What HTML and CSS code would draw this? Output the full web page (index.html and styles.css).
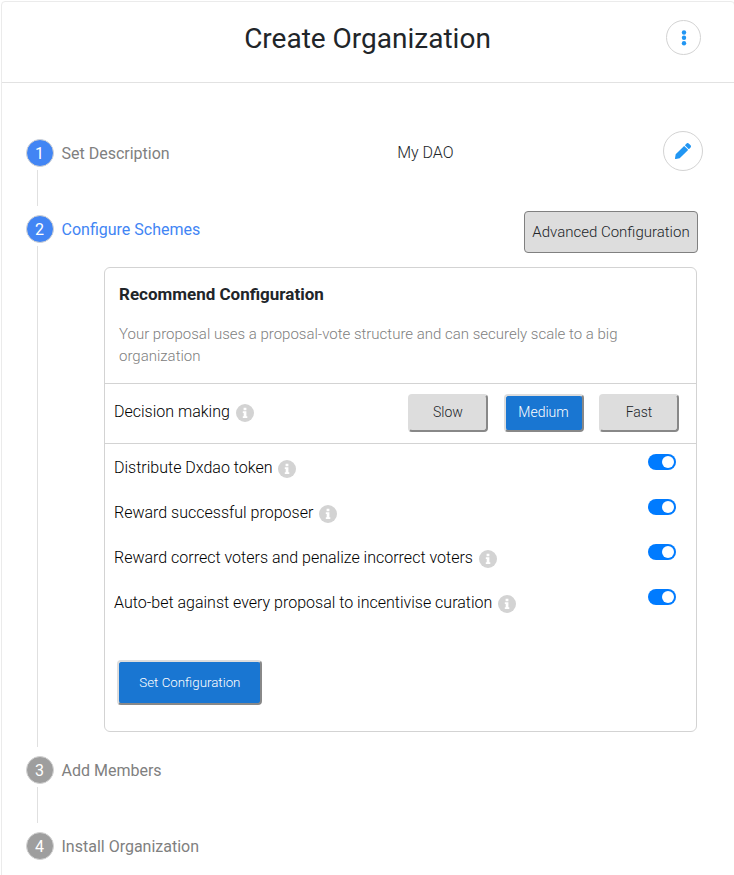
FILE: index.html
```html
<!DOCTYPE html>
<html lang="en">
<head>
<meta charset="utf-8">
<title>Create Organization</title>
<link rel="stylesheet" href="styles.css">
</head>
<body>
<svg class="defs" aria-hidden="true">
  <symbol id="info" viewBox="0 0 18 18">
    <circle cx="9" cy="9" r="9" fill="#d3d3d3"/>
    <path fill="#fff" d="M7.6 3.8h2.8v2.4H7.6zM6.8 7.3h3.6v4.9h.9V14H6.8v-1.8h.9V9.1h-.9z"/>
  </symbol>
</svg>
<main class="panel">
  <header class="header">
    <h1 class="title">Create Organization</h1>
    <button class="round menu" aria-label="Menu">
      <svg width="6" height="16" viewBox="0 0 6 16" fill="#2196f3"><circle cx="3" cy="2.5" r="2.2"/><circle cx="3" cy="7.8" r="2.2"/><circle cx="3" cy="13.2" r="2.2"/></svg>
    </button>
  </header>
  <section class="steps">
    <div class="step">
      <div class="head">
        <span class="num">1</span><span class="label">Set Description</span>
        <span class="value">My DAO</span>
        <button class="round edit" aria-label="Edit">
          <svg width="16" height="16" viewBox="0 0 512 512" fill="#2196f3"><path d="M498 142l-46 46c-5 5-12 5-17 0L324 77c-5-5-5-12 0-17l46-46c19-19 49-19 68 0l60 60c19 19 19 49 0 68zM284 100L22 362 0 484c-3 16 12 31 28 28l122-21 262-263c5-5 5-12 0-17L301 100c-5-5-12-5-17 0z"/></svg>
        </button>
      </div>
      <div class="body short"><span class="line"></span></div>
    </div>
    <div class="step">
      <div class="head active">
        <span class="num">2</span><span class="label">Configure Schemes</span>
        <button class="advanced">Advanced Configuration</button>
      </div>
      <div class="body">
        <span class="line"></span>
        <div class="card">
          <div class="intro">
            <h2>Recommend Configuration</h2>
            <p>Your proposal uses a proposal-vote structure and can securely scale to a big organization</p>
          </div>
          <div class="decision">
            <span class="text">Decision making</span><svg class="info"><use href="#info"/></svg>
            <div class="speeds">
              <button class="btn">Slow</button>
              <button class="btn primary">Medium</button>
              <button class="btn">Fast</button>
            </div>
          </div>
          <div class="option"><span class="text">Distribute Dxdao token</span><svg class="info"><use href="#info"/></svg><span class="switch"></span></div>
          <div class="option"><span class="text">Reward successful proposer</span><svg class="info"><use href="#info"/></svg><span class="switch"></span></div>
          <div class="option"><span class="text">Reward correct voters and penalize incorrect voters</span><svg class="info"><use href="#info"/></svg><span class="switch"></span></div>
          <div class="option"><span class="text">Auto-bet against every proposal to incentivise curation</span><svg class="info"><use href="#info"/></svg><span class="switch"></span></div>
          <button class="btn primary submit">Set Configuration</button>
        </div>
      </div>
    </div>
    <div class="step">
      <div class="head pending"><span class="num">3</span><span class="label">Add Members</span></div>
      <div class="body short"><span class="line"></span></div>
    </div>
    <div class="step">
      <div class="head pending"><span class="num">4</span><span class="label">Install Organization</span></div>
    </div>
  </section>
</main>
</body>
</html>
```
FILE: styles.css
```css
* { box-sizing: border-box; }
html { overflow: hidden; }
body {
  margin: 0;
  height: 875px;
  overflow: hidden;
  background: #fff;
  color: #212529;
  font-family: Roboto, sans-serif;
  font-size: 16px;
}
button { font-family: inherit; padding: 0; }
svg { display: block; }
.defs { display: none; }

.panel {
  width: 734px;
  height: 900px;
  margin: 1px 0 0 1px;
  border: 1px solid #ebebeb;
  border-radius: 4px;
}
.header {
  display: grid;
  grid-template-columns: 1fr auto 1fr;
  align-items: center;
  height: 81px;
  padding-right: 33px;
  padding-left: 32px;
  border-bottom: 1px solid #e2e2e2;
}
.title {
  grid-column: 2;
  margin: 0;
  padding-bottom: 7px;
  font-size: 28px;
  font-weight: 400;
  line-height: 34px;
}
.round {
  display: flex;
  align-items: center;
  justify-content: center;
  border: 1px solid #d3d3d3;
  border-radius: 50%;
  background: #fff;
}
.menu { width: 35px; height: 35px; justify-self: end; margin-bottom: 9px; }
.edit { flex: none; width: 40px; height: 40px; margin: 0 0 4px auto; padding-bottom: 1px; }
.steps { padding: 56px 31px 0 24px; }
.head {
  display: flex;
  align-items: center;
  height: 28px;
  color: #808080;
}
.num {
  flex: none;
  width: 28px;
  height: 28px;
  margin-right: 7.5px;
  padding-right: 1px;
  border: 1px solid #d3d3d3;
  border-radius: 50%;
  background: #4285f4;
  color: #fff;
  line-height: 27px;
  text-align: center;
}
.pending .num { background: #9e9e9e; }
.active .label { color: #4285f4; }
.value { margin-left: 227.5px; padding-bottom: 2px; color: #212529; font-weight: 300; }
.body {
  display: flex;
  height: 513px;
  padding: 3px 0 9px 11px;
}
.body.short { height: 48px; }
.line { flex: none; width: 1px; background: #e0e0e0; }
.advanced {
  flex: none;
  width: 174px;
  height: 42px;
  margin: 6px 5px 0 auto;
  border: 1px solid #808080;
  border-radius: 4px;
  background: #ddd;
  color: #212529;
  font-size: 15px;
  font-weight: 300;
}
.card {
  flex: none;
  width: 593px;
  height: 465px;
  margin: 21px 0 0 66px;
  border: 1px solid #d3d3d3;
  border-radius: 6px;
}
.intro {
  height: 116px;
  padding: 15px 14px 0;
  border-bottom: 1px solid #d3d3d3;
}
.intro h2 { margin: 0; font-size: 17px; font-weight: 700; line-height: 22px; }
.intro p {
  margin: 18px 0 0;
  color: #808080;
  font-size: 15px;
  font-weight: 300;
  line-height: 22px;
}
.decision {
  display: flex;
  align-items: center;
  height: 60px;
  padding: 0 17px 4px 9px;
  border-bottom: 1px solid #d3d3d3;
}
.text { color: #000; font-weight: 300; line-height: 20px; }
.option .text { padding-top: 2px; }
.info { flex: none; width: 18px; height: 18px; margin: 3px 0 0 5.7px; }
.speeds { display: flex; gap: 15.5px; margin: 3px 0 0 auto; }
.btn {
  width: 80px;
  height: 38px;
  padding-bottom: 2px;
  border: 2px solid;
  border-color: #ddd #888 #888 #ddd;
  border-radius: 4px;
  background: #ddd;
  color: #212529;
  font-size: 14px;
  font-weight: 300;
}
.btn.primary { background: #1976d2; color: #fff; }
.option {
  display: flex;
  align-items: center;
  height: 45px;
  padding: 1px 20px 0 9px;
}
.switch {
  display: flex;
  justify-content: flex-end;
  width: 28px;
  height: 16px;
  margin: 0 0 10px auto;
  padding: 2px;
  border-radius: 8px;
  background: #007bff;
}
.switch::after {
  content: "";
  width: 12px;
  height: 12px;
  border-radius: 50%;
  background: #fff;
}
.btn.submit {
  width: 145px;
  height: 45px;
  margin: 36px 0 0 12.4px;
  padding-bottom: 0;
  font-size: 13.333px;
}
```
